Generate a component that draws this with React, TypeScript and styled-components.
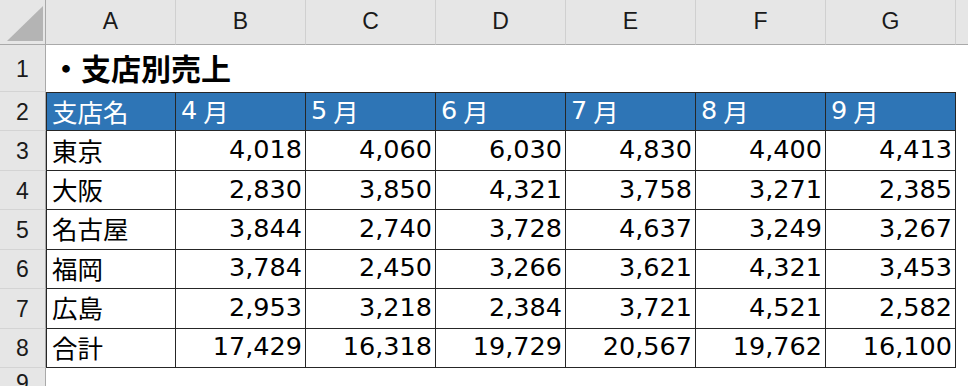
import React from "react";
import styled, { createGlobalStyle, css } from "styled-components";

const Global = createGlobalStyle`
  html, body { margin: 0; padding: 0; background: #ffffff; overflow: hidden; }
  #root { width: 968px; height: 386px; overflow: hidden; }
`;

const Sheet = styled.div`
  display: grid;
  grid-template-columns: 46px repeat(7, 130px) 1fr;
  grid-template-rows: 45px 47px repeat(7, 39.43px) 1fr;
  width: 968px;
  height: 386px;
  background: #ffffff;
  font-family: "DejaVu Sans", "Noto Sans CJK JP", sans-serif;
`;

const Corner = styled.div`
  position: relative;
  background: #e6e6e6;
  border-right: 1px solid #a9a9a9;
  border-bottom: 1px solid #a9a9a9;
  box-sizing: border-box;
`;

const CornerTriangle = styled.svg`
  position: absolute;
  left: 7px;
  top: 6px;
`;

const ColHead = styled.div<{ $last?: boolean }>`
  display: flex;
  align-items: center;
  justify-content: center;
  background: #e6e6e6;
  border-bottom: 1px solid #a9a9a9;
  border-right: ${(p) => (p.$last ? "none" : "1px solid #d0d0d0")};
  box-sizing: border-box;
  font-family: "Liberation Sans", "Noto Sans", sans-serif;
  font-size: 23px;
  color: #1a1a1a;
  padding-bottom: 1px;
`;

const RowHead = styled.div`
  display: flex;
  align-items: center;
  justify-content: center;
  background: #e6e6e6;
  border-right: 1px solid #a9a9a9;
  border-bottom: 1px solid #d4d4d4;
  box-sizing: border-box;
  font-family: "Liberation Sans", "Noto Sans", sans-serif;
  font-size: 23px;
  color: #1a1a1a;
  padding-top: 2px;
`;

const TitleCell = styled.div`
  grid-column: 2 / -1;
  display: flex;
  align-items: center;
  padding-left: 5px;
  padding-bottom: 4px;
  font-family: "Noto Sans CJK JP", sans-serif;
  font-weight: 700;
  font-size: 30px;
  color: #000000;
`;

const Cell = styled.div<{ $head?: boolean; $first?: boolean; $num?: boolean; $top?: boolean }>`
  display: flex;
  align-items: center;
  box-sizing: border-box;
  border-right: 1px solid #262626;
  border-bottom: 1px solid #262626;
  font-size: 25.5px;
  color: #000000;
  white-space: nowrap;
  padding: 0 3px 3px 5px;
  justify-content: ${(p) => (p.$num ? "flex-end" : "flex-start")};
  ${(p) =>
    p.$first &&
    css`
      border-left: 1px solid #262626;
    `}
  ${(p) =>
    p.$top &&
    css`
      border-top: 1px solid #262626;
    `}
  ${(p) =>
    p.$head &&
    css`
      background: #2e75b6;
      color: #ffffff;
    `}
`;

const Digit = styled.span`
  margin-right: 6px;
`;

const Blank = styled.div``;

const cols = ["A", "B", "C", "D", "E", "F", "G", ""];
const months = ["4", "5", "6", "7", "8", "9"];
const rows: [string, number[]][] = [
  ["東京", [4018, 4060, 6030, 4830, 4400, 4413]],
  ["大阪", [2830, 3850, 4321, 3758, 3271, 2385]],
  ["名古屋", [3844, 2740, 3728, 4637, 3249, 3267]],
  ["福岡", [3784, 2450, 3266, 3621, 4321, 3453]],
  ["広島", [2953, 3218, 2384, 3721, 4521, 2582]],
  ["合計", [17429, 16318, 19729, 20567, 19762, 16100]],
];

const fmt = (n: number) => n.toLocaleString("en-US");

export default function App() {
  return (
    <>
      <Global />
      <Sheet>
        <Corner>
          <CornerTriangle width="37" height="36" viewBox="0 0 37 36">
            <polygon points="36,0 36,35 0,35" fill="#b4b4b4" />
          </CornerTriangle>
        </Corner>
        {cols.map((c, i) => (
          <ColHead key={i} $last={i === cols.length - 1}>
            {c}
          </ColHead>
        ))}

        <RowHead>1</RowHead>
        <TitleCell>・支店別売上</TitleCell>

        <RowHead>2</RowHead>
        <Cell $head $first $top>
          支店名
        </Cell>
        {months.map((m) => (
          <Cell key={m} $head $top>
            <Digit>{m}</Digit>月
          </Cell>
        ))}
        <Blank />

        {rows.map(([name, vals], r) => (
          <React.Fragment key={name}>
            <RowHead>{r + 3}</RowHead>
            <Cell $first>{name}</Cell>
            {vals.map((v, i) => (
              <Cell key={i} $num>
                {fmt(v)}
              </Cell>
            ))}
            <Blank />
          </React.Fragment>
        ))}

        <RowHead>9</RowHead>
      </Sheet>
    </>
  );
}
